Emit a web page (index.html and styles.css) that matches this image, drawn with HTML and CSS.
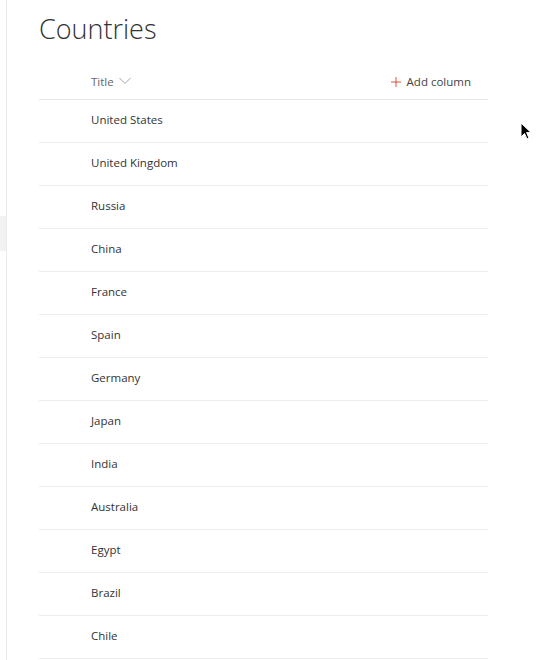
FILE: index.html
```html
<!DOCTYPE html>
<html>
<head>
<meta charset="utf-8">
<link rel="stylesheet" href="styles.css">
</head>
<body>
<div class="app">
  <div class="rail"><div class="rail-block"></div></div>
  <main class="main">
    <h1 class="page-title">Countries</h1>
    <div class="list">
      <div class="header">
        <div class="col-title">Title
          <svg class="chev" width="12" height="8" viewBox="0 0 12 8"><path d="M0.5 1 L6 6.5 L11.5 1" fill="none" stroke="#a6a6a6" stroke-width="1"/></svg>
        </div>
        <div class="add-col">
          <svg class="plus" width="10" height="10" viewBox="0 0 10 10"><path d="M5 0 V10 M0 5 H10" stroke="#d4553a" stroke-width="1"/></svg>
          Add column
        </div>
      </div>
      <div class="row">United States</div>
      <div class="row">United Kingdom</div>
      <div class="row">Russia</div>
      <div class="row">China</div>
      <div class="row">France</div>
      <div class="row">Spain</div>
      <div class="row">Germany</div>
      <div class="row">Japan</div>
      <div class="row">India</div>
      <div class="row">Australia</div>
      <div class="row">Egypt</div>
      <div class="row">Brazil</div>
      <div class="row">Chile</div>
    </div>
  </main>
  <svg class="cursor" width="12" height="19" viewBox="0 0 12 19"><path d="M1 1 L1 15 L4.5 11.5 L7 17 L9 16 L6.6 10.6 L11 10.6 Z" fill="#000" stroke="#fff" stroke-width="1"/></svg>
</div>
</body>
</html>
```
FILE: styles.css
```css
html, body {
  margin: 0;
  padding: 0;
  background: #fff;
}
body {
  font-family: "Open Sans", "Noto Sans", sans-serif;
  color: #333;
}
.app {
  position: relative;
  display: flex;
  min-height: 660px;
}
.rail {
  width: 6px;
  border-right: 1px solid #eaeaea;
  flex-shrink: 0;
  padding-top: 216px;
  box-sizing: content-box;
}
.rail-block {
  height: 35px;
  background: #f2f2f2;
}
.main {
  padding-left: 32px;
  width: 449px;
}
.page-title {
  margin: 0;
  padding-top: 10px;
  font-size: 27px;
  font-weight: 300;
  line-height: 38px;
  color: #333;
}
.header {
  margin-top: 16px;
  height: 36px;
  display: flex;
  align-items: center;
  justify-content: space-between;
  border-bottom: 1px solid #e6e6e6;
  box-sizing: border-box;
  padding-left: 52px;
  padding-right: 17px;
  font-size: 11.5px;
  color: #666;
}
.col-title {
  display: flex;
  align-items: center;
  gap: 5px;
}
.chev {
  margin-top: -1px;
}
.add-col {
  display: flex;
  align-items: center;
  gap: 6px;
  color: #444;
}
.row {
  height: 43px;
  box-sizing: border-box;
  border-bottom: 1px solid #ededed;
  display: flex;
  align-items: center;
  padding-left: 52px;
  padding-bottom: 3px;
  font-size: 11.5px;
  color: #333;
}
.cursor {
  position: absolute;
  left: 520px;
  top: 122px;
}
```
